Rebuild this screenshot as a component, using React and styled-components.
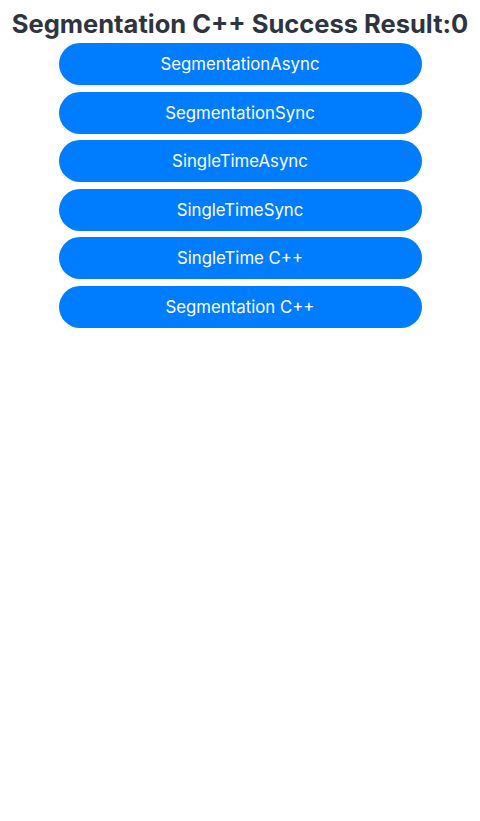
import styled, { createGlobalStyle } from 'styled-components';

const GlobalStyle = createGlobalStyle`
  html, body {
    margin: 0;
    padding: 0;
    background: #ffffff;
  }
  body {
    font-family: Inter, "Noto Sans", sans-serif;
  }
`;

const buttons = [
  'SegmentationAsync',
  'SegmentationSync',
  'SingleTimeAsync',
  'SingleTimeSync',
  'SingleTime C++',
  'Segmentation C++',
];

function App() {
  return (
    <>
      <GlobalStyle />
      <StyledPage>
        <StyledTitle>Segmentation C++ Success Result:0</StyledTitle>
        <StyledButtonList>
          {buttons.map((label) => (
            <StyledButton key={label}>{label}</StyledButton>
          ))}
        </StyledButtonList>
      </StyledPage>
    </>
  );
}

const StyledPage = styled.div`
  display: flex;
  flex-direction: column;
  align-items: center;
  width: 480px;
  min-height: 821px;
`;

const StyledTitle = styled.h1`
  margin: 6px 0 0;
  height: 35px;
  line-height: 35px;
  font-size: 25.5px;
  font-weight: 700;
  color: #2e3440;
  white-space: nowrap;
`;

const StyledButtonList = styled.div`
  display: flex;
  flex-direction: column;
  gap: 6.6px;
  margin-top: 2px;
`;

const StyledButton = styled.button`
  width: 363px;
  height: 42px;
  border: none;
  border-radius: 21px;
  background-color: #007dff;
  color: #ffffff;
  font-family: Inter, "Noto Sans", sans-serif;
  font-size: 16.8px;
  font-weight: 400;
  padding: 0;
`;

export default App;
